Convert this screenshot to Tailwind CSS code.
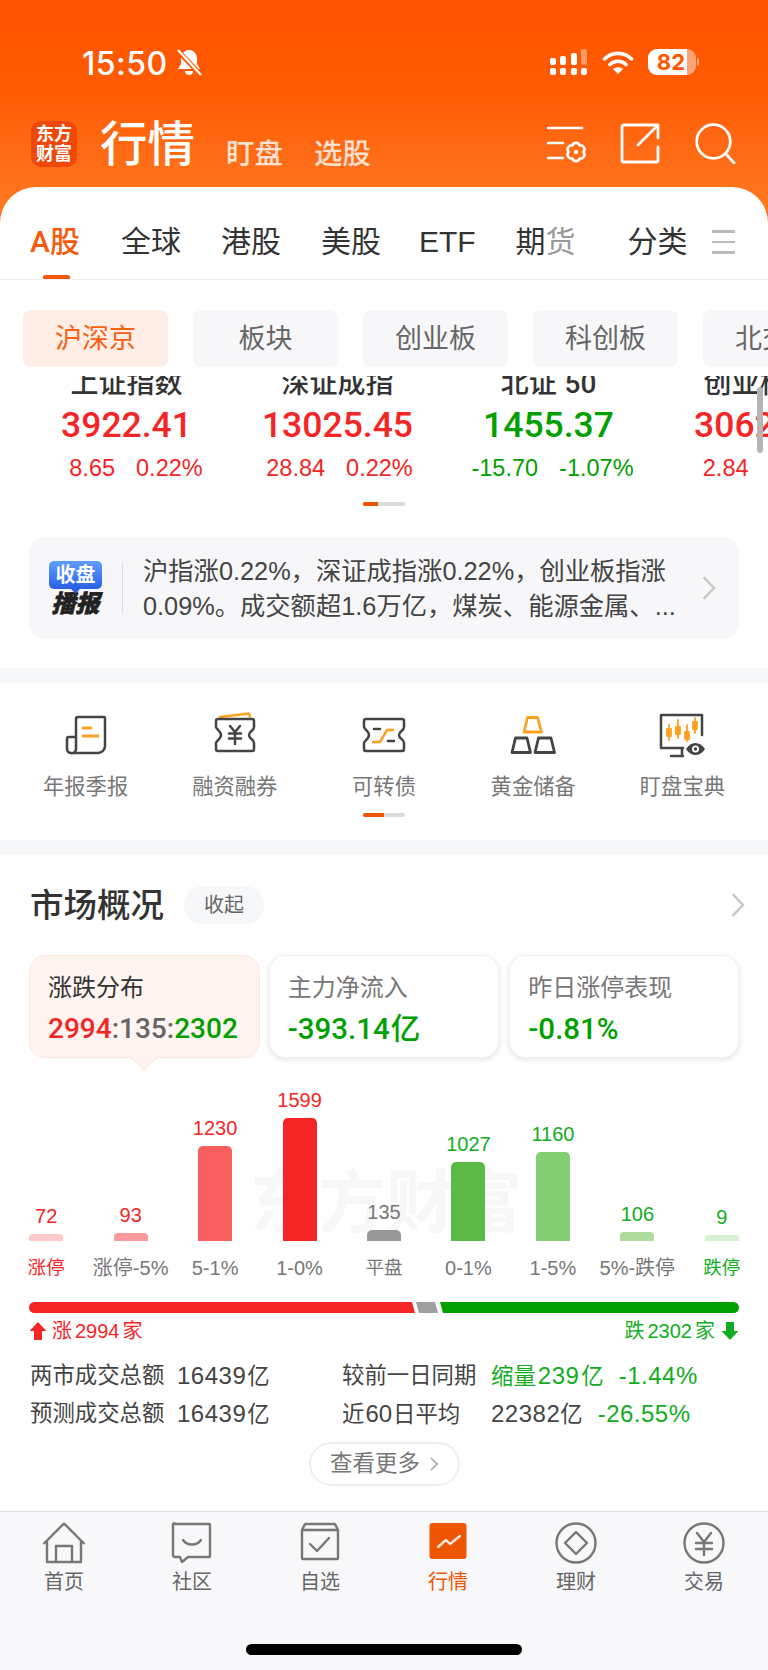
<!DOCTYPE html>
<html lang="zh">
<head>
    <meta charset="UTF-8">
    <title>行情</title>
    <script src="https://cdn.jsdelivr.net/npm/@tailwindcss/browser@4"></script>
</head>
<body class="bg-white [font-family:'Liberation_Sans','Noto_Sans_CJK_SC',sans-serif]">
<div class="w-[768px] h-[1670px] overflow-hidden flex flex-col">

    <!-- Orange header -->
    <header class="h-[226px] shrink-0 bg-linear-to-b from-[#ff5500] via-[#ff5a02] via-40% to-[#ff7c22] text-white">
        <div class="h-[121px] flex items-start relative">
            <span class="mt-[46px] ml-[82px] text-[32px] leading-[36px] font-medium [font-family:'Inter',sans-serif] tracking-[0.5px]">15:50</span>
            <svg class="mt-[49px] ml-[8px]" width="26" height="28" viewBox="0 0 26 28" fill="white">
                <path d="M13 1c5 0 8 4 8 9v5l3 5H2l3-5v-5c0-5 3-9 8-9z"/><path d="M9 22h8a4 4 0 0 1-8 0z"/>
                <path d="M1 1l24 25" stroke="#ff5a02" stroke-width="5"/><path d="M2 1l23 25" stroke="white" stroke-width="2.2"/>
            </svg>
            <!-- signal -->
            <div class="ml-auto mt-[49px] flex gap-[4.5px] items-end h-[26px]">
                <div class="flex flex-col gap-[3px]"><i class="block w-[6px] h-[7px] bg-white rounded-[2px]"></i><i class="block w-[6px] h-[7px] bg-white rounded-[2px]"></i></div>
                <div class="flex flex-col gap-[3px]"><i class="block w-[6px] h-[9px] bg-white rounded-[2px]"></i><i class="block w-[6px] h-[7px] bg-white rounded-[2px]"></i></div>
                <div class="flex flex-col gap-[3px]"><i class="block w-[6px] h-[12px] bg-white rounded-[2px]"></i><i class="block w-[6px] h-[7px] bg-white rounded-[2px]"></i></div>
                <div class="flex flex-col gap-[3px]"><i class="block w-[6px] h-[16px] bg-white/40 rounded-[2px]"></i><i class="block w-[6px] h-[7px] bg-white rounded-[2px]"></i></div>
            </div>
            <svg class="mt-[50px] ml-[15px]" width="32" height="25" viewBox="0 0 32 25" fill="none" stroke="white" stroke-width="3.6" stroke-linecap="round">
                <path d="M2.5 9C10 1.500 22 1.500 29.500 9"/><path d="M8 14.500c4.500-4.300 11.500-4.300 16 0"/><path d="M16 24l-5-5c2.800-2.400 7.200-2.400 10 0z" fill="white" stroke="none"/>
            </svg>
            <div class="mt-[49px] ml-[14px] mr-[72px] w-[48px] h-[26px] rounded-[9px] bg-white/45 overflow-hidden">
                <div class="w-[39px] h-[26px] bg-white flex items-center justify-end pr-[2px] text-[#ff5500] text-[22px] font-bold [font-family:'Inter',sans-serif] leading-[26px]">82</div>
            </div>
            <div class="absolute left-[697px] top-[58px] w-[2px] h-[8px] rounded-r-[2px] bg-white/50"></div>
        </div>
        <div class="flex items-start">
            <div class="ml-[31px] w-[46px] h-[46px] rounded-[10px] bg-[#f0480a] flex flex-col items-center justify-center text-[18px] leading-[20px] font-bold">
                <span>东方</span><span>财富</span>
            </div>
            <span class="ml-[23px] mt-[1px] text-[47.500px] leading-[46px] font-medium">行情</span>
            <span class="ml-[31px] mt-[17px] text-[28.500px] leading-[32px] text-white/80 font-medium">盯盘</span>
            <span class="ml-[31px] mt-[17px] text-[28.500px] leading-[32px] text-white/80 font-medium">选股</span>
            <svg class="ml-auto mt-[5px]" width="42" height="38" viewBox="0 0 42 38" fill="none" stroke="white" stroke-width="2.6" stroke-linecap="round">
                <path d="M1 2h34M1 17h15M1 32h15"/>
                <path transform="translate(29 26)" d="M7.500 0A4 4 0 0 1 3.750 6.500A4 4 0 0 1 -3.750 6.500A4 4 0 0 1 -7.500 0A4 4 0 0 1 -3.750 -6.500A4 4 0 0 1 3.750 -6.500A4 4 0 0 1 7.500 0Z"/>
                <circle cx="29" cy="26" r="2.200" fill="white" stroke="none"/>
            </svg>
            <svg class="ml-[31px] mt-[2px]" width="40" height="41" viewBox="0 0 40 41" fill="none" stroke="white" stroke-width="2.8" stroke-linecap="round" stroke-linejoin="round">
                <path d="M24 2H4a2 2 0 0 0-2 2v34a1 1 0 0 0 1 1h34a1 1 0 0 0 1-1V24"/>
                <path d="M25 2h13v13M38 2L18 22"/>
            </svg>
            <svg class="ml-[35px] mt-[2px] mr-[32px]" width="41" height="41" viewBox="0 0 41 41" fill="none" stroke="white" stroke-width="2.8" stroke-linecap="round">
                <circle cx="18.500" cy="18.500" r="16.800"/><path d="M31 31l8 9"/>
            </svg>
        </div>
    </header>

    <main class="relative -mt-[39px] bg-white rounded-t-[36px] flex-1 flex flex-col overflow-hidden">
        <!-- Market tabs -->
        <nav class="h-[93px] shrink-0 border-b border-[#eeeeee] relative flex items-start pt-[37px] pl-[30px] gap-[40px] text-[30px] leading-[36px] text-[#333333]">
            <span class="text-[#f55a0c] font-medium [font-family:'Roboto','Noto_Sans_CJK_SC',sans-serif]">A股</span>
            <span class="ml-[1px]">全球</span>
            <span>港股</span>
            <span>美股</span>
            <span class="-ml-[2px]">ETF</span>
            <span>期<span class="text-[#9a9a9a]">货</span></span>
            <span class="ml-[12px]">分类</span>
            <div class="ml-[-16px] mt-[6px] w-[23px] flex flex-col gap-[8px]">
                <i class="block h-[2.500px] bg-[#bbbbbb]"></i><i class="block h-[2.500px] bg-[#bbbbbb]"></i><i class="block h-[2.500px] bg-[#bbbbbb]"></i>
            </div>
            <div class="absolute left-[43px] bottom-0 w-[27px] h-[4px] rounded-t-[2px] bg-[#f55a0c]"></div>
        </nav>

        <!-- Sub tabs -->
        <div class="flex gap-[25px] pl-[23px] pt-[30px] shrink-0 text-[27px] leading-[59px] text-center text-[#666666]">
            <div class="w-[145px] h-[57px] shrink-0 rounded-[8px] bg-[#ffeee6] text-[#f9600f]">沪深京</div>
            <div class="w-[145px] h-[57px] shrink-0 rounded-[8px] bg-[#f7f7f9]">板块</div>
            <div class="w-[145px] h-[57px] shrink-0 rounded-[8px] bg-[#f7f7f9]">创业板</div>
            <div class="w-[145px] h-[57px] shrink-0 rounded-[8px] bg-[#f7f7f9]">科创板</div>
            <div class="w-[145px] h-[57px] shrink-0 rounded-[8px] bg-[#f7f7f9]">北交所</div>
        </div>

        <!-- Index cards -->
        <div class="relative mt-[9px] h-[106px] shrink-0 overflow-hidden pl-[21px] flex text-center">
            <div class="w-[211px] shrink-0 -mt-[6px]">
                <div class="text-[28px] leading-[28px] font-medium text-[#333333]">上证指数</div>
                <div class="mt-[7px] text-[35.500px] leading-[40px] font-medium [font-family:'Roboto',sans-serif] text-[#f52525]">3922.41</div>
                <div class="mt-[11px] pl-[19px] flex justify-center gap-[21px] text-[23.500px] leading-[24px] text-[#f52525]"><span>8.65</span><span>0.22%</span></div>
            </div>
            <div class="w-[211px] shrink-0 -mt-[6px]">
                <div class="text-[28px] leading-[28px] font-medium text-[#333333]">深证成指</div>
                <div class="mt-[7px] text-[35.500px] leading-[40px] font-medium [font-family:'Roboto',sans-serif] text-[#f52525]">13025.45</div>
                <div class="mt-[11px] pl-[4px] flex justify-center gap-[21px] text-[23.500px] leading-[24px] text-[#f52525]"><span>28.84</span><span>0.22%</span></div>
            </div>
            <div class="w-[211px] shrink-0 -mt-[6px]">
                <div class="text-[28px] leading-[28px] font-medium text-[#333333]">北证 <span class="[font-family:'Roboto',sans-serif]">50</span></div>
                <div class="mt-[7px] text-[35.500px] leading-[40px] font-medium [font-family:'Roboto',sans-serif] text-[#00a000]">1455.37</div>
                <div class="mt-[11px] pl-[8px] flex justify-center gap-[21px] text-[23.500px] leading-[24px] text-[#00a000]"><span>-15.70</span><span>-1.07%</span></div>
            </div>
            <div class="w-[211px] shrink-0 -mt-[6px]">
                <div class="text-[28px] leading-[28px] font-medium text-[#333333]">创业板指</div>
                <div class="mt-[7px] text-[35.500px] leading-[40px] font-medium [font-family:'Roboto',sans-serif] text-[#f52525]">3062.18</div>
                <div class="mt-[11px] pl-[20px] flex justify-center gap-[21px] text-[23.500px] leading-[24px] text-[#f52525]"><span>2.84</span><span>0.09%</span></div>
            </div>
            <div class="absolute left-[757px] top-[11px] w-[6px] h-[66px] rounded-full bg-[#b5b5b5]"></div>
        </div>
        <div class="mx-auto mt-[20px] w-[42px] h-[4px] rounded-full bg-[#d8dade] shrink-0 overflow-hidden"><div class="w-[15px] h-[4px] bg-[#ee5500]"></div></div>

        <!-- Closing report -->
        <div class="mx-[29px] mt-[31px] h-[102px] shrink-0 rounded-[16px] bg-[#f7f7f9] flex items-center">
            <div class="ml-[20px] mt-[1px] w-[53px] shrink-0 flex flex-col items-center">
                <div class="w-[53px] h-[28px] rounded-[5px] bg-linear-to-b from-[#5f9dff] to-[#2b5fe6] text-white text-[20px] leading-[28px] text-center font-bold relative">收盘
                    <i class="absolute left-[23px] -bottom-[3px] w-[7px] h-[7px] rotate-45 bg-[#2b5fe6]"></i>
                </div>
                <div class="mt-[3px] text-[24px] leading-[24px] italic font-black text-[#222222] [-webkit-text-stroke:0.6px_#222222]">播报</div>
            </div>
            <div class="ml-[20px] w-[1px] h-[50px] bg-[#dddddd] shrink-0"></div>
            <div class="ml-[20px] mt-[1px] w-[530px] text-[25.300px] leading-[35px] text-[#444444]">
                <div class="whitespace-nowrap">沪指涨0.22%，深证成指涨0.22%，创业板指涨</div>
                <div class="whitespace-nowrap">0.09%。成交额超1.6万亿，煤炭、能源金属、...</div>
            </div>
            <svg class="ml-[29px]" width="14" height="24" viewBox="0 0 14 24" fill="none" stroke="#c8c8c8" stroke-width="2.500"><path d="M1.500 1l10.500 11L1.500 23"/></svg>
        </div>

        <div class="mt-[29px] h-[15px] bg-[#f6f7f9] shrink-0"></div>

        <!-- Shortcut icons -->
        <div class="h-[157px] shrink-0 relative">
            <div class="pl-[11px] pr-[11px] pt-[29px] grid grid-cols-5 text-center text-[21.300px] leading-[26px] text-[#777777]">
                <div class="flex flex-col items-center">
                    <svg width="46" height="46" viewBox="0 0 46 46" fill="none" stroke="#444444" stroke-width="2.500" stroke-linejoin="round">
                        <path d="M13 37V7a2 2 0 0 1 2-2h26a1 1 0 0 1 1 1v28a7 7 0 0 1-7 7H8a4 4 0 0 1-4-4V27a2 2 0 0 1 2-2h7M13 37a4 4 0 0 1-5 4"/>
                        <path d="M19 16h10M19 24h17" stroke="#ffa11e" stroke-width="2.800"/>
                    </svg>
                    <span class="mt-[16px]">年报季报</span>
                </div>
                <div class="flex flex-col items-center">
                    <svg width="46" height="46" viewBox="0 0 46 46" fill="none" stroke="#444444" stroke-width="2.500" stroke-linecap="round" stroke-linejoin="round">
                        <path d="M8 5L37 1.500l1 3" stroke="#ffa11e"/>
                        <path d="M4 9a2 2 0 0 1 2-2h34a2 2 0 0 1 2 2v6c0 4-5 4-5 8s5 4 5 8v6a2 2 0 0 1-2 2H6a2 2 0 0 1-2-2v-6c0-2 5-4 5-8s-5-6-5-8z"/>
                        <path d="M18 14l5 6 5-6M23 20v12M17 21.500h12M17 26.500h12"/>
                    </svg>
                    <span class="mt-[16px]">融资融券</span>
                </div>
                <div class="flex flex-col items-center">
                    <svg width="46" height="46" viewBox="0 0 46 46" fill="none" stroke="#444444" stroke-width="2.500" stroke-linecap="round" stroke-linejoin="round">
                        <path d="M3 9a2 2 0 0 1 2-2h36a2 2 0 0 1 2 2v6c0 4-5 4-5 8s5 4 5 8v6a2 2 0 0 1-2 2H5a2 2 0 0 1-2-2v-6c0-2 5-4 5-8s-5-6-5-8z"/>
                        <path d="M13 17h6M27 29h6"/>
                        <path d="M12 30h7l7-12h6" stroke="#ffa11e"/>
                    </svg>
                    <span class="mt-[16px]">可转债</span>
                </div>
                <div class="flex flex-col items-center">
                    <svg width="46" height="46" viewBox="0 0 46 46" fill="none" stroke="#444444" stroke-width="2.800" stroke-linejoin="round">
                        <path d="M17.500 5.500h10l4 14.500H14z" stroke="#ffa11e"/>
                        <path d="M5.500 26H17l3.500 14.500H2z"/>
                        <path d="M28.500 26H41l3.500 14.500H25z"/>
                    </svg>
                    <span class="mt-[16px]">黄金储备</span>
                </div>
                <div class="flex flex-col items-center">
                    <svg width="46" height="46" viewBox="0 0 46 46" fill="none" stroke="#444444" stroke-width="2.500" stroke-linecap="round" stroke-linejoin="round">
                        <path d="M43 23V3H2v33h22M23 36v8M12 44h12"/>
                        <g stroke="#ffa11e" stroke-width="1.800">
                            <path d="M10 13v15M19 8v18M28 13v16M36 6v15"/>
                            <path d="M8 17h4v7H8zM17 15h4v7h-4zM26 20h4v7h-4zM34 10h4v7h-4z" fill="#ffa11e"/>
                        </g>
                        <path d="M27 37c5-8 14-8 19 0-5 8-14 8-19 0z" fill="#444444" stroke="none"/>
                        <circle cx="36.500" cy="37" r="3.500" fill="white" stroke="none"/>
                        <circle cx="36.500" cy="37" r="1.700" fill="#444444" stroke="none"/>
                    </svg>
                    <span class="mt-[16px]">盯盘宝典</span>
                </div>
            </div>
            <div class="absolute left-[363px] top-[130px] w-[42px] h-[4px] rounded-full bg-[#d8dade] overflow-hidden"><div class="w-[21px] h-[4px] bg-[#ee5500]"></div></div>
        </div>

        <div class="h-[15px] bg-[#f6f7f9] shrink-0"></div>

        <!-- Market overview -->
        <section class="h-[656px] shrink-0 relative">
            <div class="flex items-center mt-[31px] pl-[30px] pr-[23px] h-[38px]">
                <h2 class="mt-[1px] text-[33.500px] leading-[38px] font-medium text-[#333333]">市场概况</h2>
                <span class="ml-[20px] w-[80px] h-[38px] rounded-full bg-[#f6f7f9] text-[20px] leading-[38px] text-center text-[#666666]">收起</span>
                <svg class="ml-auto" width="14" height="24" viewBox="0 0 14 24" fill="none" stroke="#c8c8c8" stroke-width="2.500"><path d="M1.500 1l10.500 11L1.500 23"/></svg>
            </div>

            <div class="mx-[29px] mt-[31px] flex gap-[9px] items-start">
                <div class="relative w-[231px] h-[103px] rounded-[16px] bg-[#fff4f0] border border-[#ffe6dc] px-[18px] pt-[17px]">
                    <div class="text-[24px] leading-[30px] text-[#333333]">涨跌分布</div>
                    <div class="mt-[10px] text-[28px] leading-[32px] font-medium whitespace-nowrap text-[#666666] [font-family:'Roboto',sans-serif]"><span class="text-[#f52525]">2994</span>:135:<span class="text-[#00a000]">2302</span></div>
                    <i class="absolute left-[105px] -bottom-[10px] w-[18px] h-[18px] rotate-45 bg-[#fff4f0] border-r border-b border-[#ffe6dc]"></i>
                </div>
                <div class="w-[231px] h-[103px] rounded-[16px] bg-white border border-[#eeeeee] shadow-[0_2px_6px_rgba(0,0,0,0.1)] px-[18px] pt-[17px]">
                    <div class="text-[24px] leading-[30px] text-[#777777]">主力净流入</div>
                    <div class="mt-[10px] text-[29.500px] leading-[32px] font-medium text-[#00a000] [font-family:'Roboto','Noto_Sans_CJK_SC',sans-serif]">-393.14<span class="ml-[1px]">亿</span></div>
                </div>
                <div class="ml-[1px] w-[230px] h-[103px] rounded-[16px] bg-white border border-[#eeeeee] shadow-[0_2px_6px_rgba(0,0,0,0.1)] px-[18px] pt-[17px]">
                    <div class="text-[24px] leading-[30px] text-[#777777]">昨日涨停表现</div>
                    <div class="mt-[10px] text-[29.500px] leading-[32px] font-medium text-[#00a000] [font-family:'Roboto',sans-serif]">-0.81%</div>
                </div>
            </div>

            <!-- Distribution chart -->
            <div class="relative mt-[22px] h-[200px] px-[4px] grid grid-cols-9 items-end text-center">
                <div class="absolute left-[250px] top-[88px] text-[68px] leading-[70px] font-bold text-[#f7f7f7] whitespace-nowrap">东方财富</div>
                <div class="relative flex flex-col items-center"><span class="text-[20px] leading-[21px] text-[#f52525]">72</span><i class="mt-[7px] block w-[34px] h-[7px] rounded-t-[4px] bg-[#ffc9c9]"></i><span class="mt-[15px] text-[18.500px] leading-[24px] text-[#f52525]">涨停</span></div>
                <div class="relative flex flex-col items-center"><span class="text-[20px] leading-[21px] text-[#f52525]">93</span><i class="mt-[7px] block w-[34px] h-[8px] rounded-t-[4px] bg-[#fb9a9a]"></i><span class="mt-[15px] text-[20px] leading-[24px] text-[#777777] whitespace-nowrap">涨停-5%</span></div>
                <div class="relative flex flex-col items-center"><span class="text-[20px] leading-[21px] text-[#f52525]">1230</span><i class="mt-[7px] block w-[34px] h-[95px] rounded-t-[5px] bg-[#f95f5f]"></i><span class="mt-[15px] text-[20px] leading-[24px] text-[#777777]">5-1%</span></div>
                <div class="relative flex flex-col items-center"><span class="text-[20px] leading-[21px] text-[#f52525]">1599</span><i class="mt-[7px] block w-[34px] h-[123px] rounded-t-[5px] bg-[#f52525]"></i><span class="mt-[15px] text-[20px] leading-[24px] text-[#777777]">1-0%</span></div>
                <div class="relative flex flex-col items-center"><span class="text-[20px] leading-[21px] text-[#777777]">135</span><i class="mt-[7px] block w-[34px] h-[11px] rounded-t-[5px] bg-[#999999]"></i><span class="mt-[15px] text-[18.500px] leading-[24px] text-[#777777]">平盘</span></div>
                <div class="relative flex flex-col items-center"><span class="text-[20px] leading-[21px] text-[#12ad1e]">1027</span><i class="mt-[7px] block w-[34px] h-[79px] rounded-t-[5px] bg-[#5bba45]"></i><span class="mt-[15px] text-[20px] leading-[24px] text-[#777777]">0-1%</span></div>
                <div class="relative flex flex-col items-center"><span class="text-[20px] leading-[21px] text-[#12ad1e]">1160</span><i class="mt-[7px] block w-[34px] h-[89px] rounded-t-[5px] bg-[#83cd72]"></i><span class="mt-[15px] text-[20px] leading-[24px] text-[#777777]">1-5%</span></div>
                <div class="relative flex flex-col items-center"><span class="text-[20px] leading-[21px] text-[#12ad1e]">106</span><i class="mt-[7px] block w-[34px] h-[9px] rounded-t-[4px] bg-[#aedc9f]"></i><span class="mt-[15px] text-[20px] leading-[24px] text-[#777777] whitespace-nowrap">5%-跌停</span></div>
                <div class="relative flex flex-col items-center"><span class="text-[20px] leading-[21px] text-[#12ad1e]">9</span><i class="mt-[7px] block w-[34px] h-[6px] rounded-t-[3px] bg-[#d8efd1]"></i><span class="mt-[15px] text-[18.500px] leading-[24px] text-[#12ad1e]">跌停</span></div>
            </div>

            <!-- Up / flat / down bar -->
            <div class="mx-[29px] mt-[22px] h-[11px] flex">
                <div class="w-[386px] rounded-l-full bg-[#f52525] [clip-path:polygon(0_0,383px_0,100%_100%,0_100%)]"></div>
                <div class="ml-[1px] w-[22px] bg-[#a0a0a0] [clip-path:polygon(0_0,19px_0,100%_100%,3px_100%)]"></div>
                <div class="ml-[2px] w-[299px] rounded-r-full bg-[#00a000] [clip-path:polygon(0_0,100%_0,100%_100%,3px_100%)]"></div>
            </div>
            <div class="mx-[29px] mt-[6px] h-[24px] flex items-center justify-between text-[20px] leading-[24px]">
                <div class="flex items-center text-[#f52525]">
                    <svg class="mr-[5px]" width="18" height="18" viewBox="0 0 18 18" fill="#f52525"><path d="M9 0l8.500 9H13v9H5V9H.5z"/></svg>
                    <span>涨</span><span class="mx-[3px]">2994</span><span>家</span>
                </div>
                <div class="flex items-center text-[#12ad1e]">
                    <span>跌</span><span class="mx-[3px]">2302</span><span>家</span>
                    <svg class="ml-[6px]" width="18" height="18" viewBox="0 0 18 18" fill="#12ad1e"><path d="M9 18L.5 9H5V0h8v9h4.500z"/></svg>
                </div>
            </div>

            <div class="ml-[30px] mt-[14px] text-[22.400px] leading-[38px] text-[#444444]">
                <div class="h-[38px] flex whitespace-nowrap">
                    <span class="w-[147px]">两市成交总额</span><span class="w-[165px]"><span class="text-[24px] tracking-[0.5px]">16439</span><span class="ml-[1px]">亿</span></span>
                    <span class="w-[149px]">较前一日同期</span><span class="text-[#12ad1e]">缩量<span class="mx-[2px] text-[24px] tracking-[0.5px]">239</span>亿</span><span class="ml-[15px] text-[24px] tracking-[0.5px] text-[#12ad1e]">-1.44%</span>
                </div>
                <div class="h-[38px] flex whitespace-nowrap">
                    <span class="w-[147px]">预测成交总额</span><span class="w-[165px]"><span class="text-[24px] tracking-[0.5px]">16439</span><span class="ml-[1px]">亿</span></span>
                    <span class="w-[149px]">近<span class="mx-[1px] text-[24px]">60</span>日平均</span><span><span class="text-[24px] tracking-[0.5px]">22382</span>亿</span><span class="ml-[15px] text-[24px] tracking-[0.5px] text-[#12ad1e]">-26.55%</span>
                </div>
            </div>

            <div class="mx-auto mt-[9px] w-[151px] h-[44px] rounded-full border-2 border-[#eeeeee] flex items-center justify-center gap-[10px] text-[22.500px] text-[#777777]">
                <span>查看更多</span>
                <svg width="8" height="14" viewBox="0 0 8 14" fill="none" stroke="#aaaaaa" stroke-width="1.600"><path d="M1 1l6 6-6 6"/></svg>
            </div>
        </section>

        <!-- Bottom tab bar -->
        <footer class="relative flex-1 bg-[#f8f8fa] border-t border-[#dddddd]">
            <div class="pt-[10px] grid grid-cols-6 text-center text-[20px] leading-[24px] text-[#666666]">
                <div class="flex flex-col items-center">
                    <svg width="44" height="42" viewBox="0 0 44 42" fill="none" stroke="#777777" stroke-width="2.400" stroke-linejoin="round">
                        <path d="M1.500 22L22 1.500 42.500 22M5 19v21h34V19M14 40V24h16v16"/>
                    </svg>
                    <span class="mt-[6px]">首页</span>
                </div>
                <div class="flex flex-col items-center">
                    <svg width="44" height="42" viewBox="0 0 44 42" fill="none" stroke="#777777" stroke-width="2.400" stroke-linejoin="round" stroke-linecap="round">
                        <path d="M5 2h34a1 1 0 0 1 1 1v31a1 1 0 0 1-1 1H18l-6 5-2-5H5a2 2 0 0 1-2-2V3a1 1 0 0 1 2-1z"/>
                        <path d="M13 18c4 6 14 6 18 0"/>
                    </svg>
                    <span class="mt-[6px]">社区</span>
                </div>
                <div class="flex flex-col items-center">
                    <svg width="44" height="42" viewBox="0 0 44 42" fill="none" stroke="#777777" stroke-width="2.400" stroke-linejoin="round" stroke-linecap="round">
                        <path d="M4 8l3-6h30l3 6v28a1 1 0 0 1-1 1H5a1 1 0 0 1-1-1zM4 8h36"/>
                        <path d="M12 22l7 7 12-13"/>
                    </svg>
                    <span class="mt-[6px]">自选</span>
                </div>
                <div class="flex flex-col items-center text-[#ee5500]">
                    <svg width="44" height="42" viewBox="0 0 44 42" fill="none">
                        <rect x="3.500" y="1" width="37" height="36" rx="3" fill="#ee5500"/>
                        <path d="M12 25l8-7 4 4 10-8" stroke="#ffe9dc" stroke-width="2.400" stroke-linecap="round" stroke-linejoin="round"/>
                    </svg>
                    <span class="mt-[6px]">行情</span>
                </div>
                <div class="flex flex-col items-center">
                    <svg width="44" height="42" viewBox="0 0 44 42" fill="none" stroke="#777777" stroke-width="2.400" stroke-linejoin="round">
                        <circle cx="22" cy="21" r="19.500"/><path d="M22 10l11 11-11 11-11-11z"/>
                    </svg>
                    <span class="mt-[6px]">理财</span>
                </div>
                <div class="flex flex-col items-center">
                    <svg width="44" height="42" viewBox="0 0 44 42" fill="none" stroke="#777777" stroke-width="2.400" stroke-linecap="round" stroke-linejoin="round">
                        <circle cx="22" cy="21" r="19.500"/><path d="M15 11l7 9 7-9M14 21h16M14 27h16M22 20v13"/>
                    </svg>
                    <span class="mt-[6px]">交易</span>
                </div>
            </div>
            <div class="absolute left-[246px] top-[132px] w-[276px] h-[11px] rounded-full bg-black"></div>
        </footer>
    </main>
</div>
</body>
</html>
